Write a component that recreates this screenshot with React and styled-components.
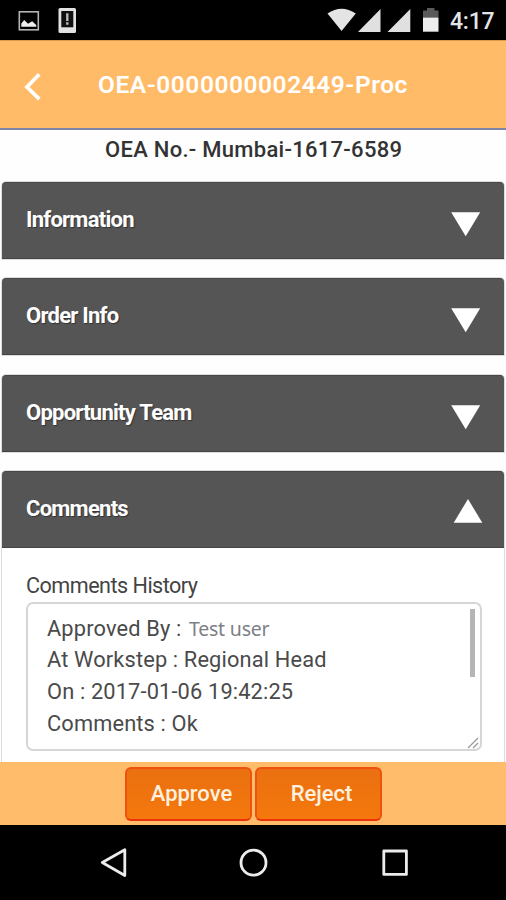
import React from 'react'
import styled, { createGlobalStyle } from 'styled-components'


const GlobalStyle = createGlobalStyle`
  * {
    box-sizing: border-box;
  }

  body {
    margin: 0;
    background: #fff;
    font-family: Roboto, "Liberation Sans", sans-serif;
  }
`

const Screen = styled.div`
  width: 506px;
  height: 900px;
  display: flex;
  flex-direction: column;
  overflow: hidden;
  background: #fefefe;
`

const StatusBar = styled.div`
  flex: none;
  height: 40px;
  display: flex;
  justify-content: space-between;
  background: #000;
`

const Clock = styled.span`
  width: 56px;
  padding-top: 2px;
  color: #e4e4e4;
  font-size: 23px;
  font-weight: 500;
  line-height: 40px;
  letter-spacing: -0.2px;
`

const StatusGroup = styled.div`
  display: flex;
`

const Header = styled.header`
  flex: none;
  height: 90px;
  display: flex;
  align-items: center;
  background: #ffbb67;
  border-top: 1px solid #d99a4e;
  border-bottom: 2px solid #8084a6;
`

const BackIcon = styled.svg`
  flex: none;
  width: 98px;
  height: 87px;
`

const Title = styled.h1`
  margin: 0;
  color: #fff;
  font-size: 24.5px;
  font-weight: 600;
  line-height: 28px;
  letter-spacing: 0.55px;
  white-space: nowrap;
`

const OrderNumber = styled.div`
  flex: none;
  height: 51px;
  padding-left: 105px;
  color: #333;
  font-size: 22px;
  font-weight: 500;
  line-height: 39px;
  letter-spacing: 0.28px;
  white-space: nowrap;
`

const Content = styled.main`
  flex: 1;
  min-height: 0;
  display: flex;
  flex-direction: column;
  gap: 17.3px;
  padding: 0 1px;
  overflow: hidden;
`

const Panel = styled.section`
  flex: none;
  border: 1px solid #ddd;
  border-radius: 5px 5px 0 0;
`

const PanelHeader = styled.div`
  height: 77px;
  display: flex;
  justify-content: space-between;
  background: #555;
  border-top: 1px solid #484848;
  border-bottom: 1px solid #444;
  border-radius: 4px 4px 0 0;
`

const PanelTitle = styled.h2`
  margin: 0;
  padding-left: 24px;
  color: #fff;
  font-size: 22px;
  font-weight: 700;
  line-height: 73px;
  letter-spacing: -0.75px;
  text-shadow: 1px 1px 1px #333;
`

const Arrow = styled.svg`
  width: 60px;
  height: 74px;
  fill: #fff;
`

const PanelBody = styled.div`
  height: 240px;
  padding: 23px 22px 0 24px;
  background: #fff;
`

const Label = styled.div`
  color: #444;
  font-size: 21.6px;
  line-height: 30px;
  letter-spacing: -0.52px;
`

const History = styled.div`
  position: relative;
  height: 149px;
  margin-top: 1px;
  padding: 9px 19px;
  border: 2px solid #d6d6d6;
  border-radius: 7px;
`

const HistoryLine = styled.div`
  color: #4a4a4a;
  font-size: 21.8px;
  line-height: 31.6px;
  letter-spacing: 0.15px;
  white-space: nowrap;
`

const UserName = styled.span`
  margin-left: 2px;
  color: #7d7f86;
  font-family: "Noto Sans", "Open Sans", sans-serif;
  font-size: 19.5px;
  line-height: 1;
  letter-spacing: -0.2px;
`

const ScrollThumb = styled.div`
  position: absolute;
  top: 5px;
  right: 5px;
  width: 5px;
  height: 68px;
  background: #b5b5b5;
`

const ResizeGrip = styled.svg`
  position: absolute;
  right: 0;
  bottom: 0;
  width: 13px;
  height: 12px;
`

const Footer = styled.footer`
  flex: none;
  height: 63px;
  display: flex;
  justify-content: center;
  gap: 3px;
  padding-top: 5px;
  background: #ffbd6b;
`

const ActionButton = styled.button`
  width: 127px;
  height: 54px;
  padding: 0 0 1px 7px;
  color: #fff0df;
  background: linear-gradient(#ea7011, #f4780c);
  border: 2px solid #ee520e;
  border-bottom-color: #ea3208;
  border-radius: 6px;
  font-family: inherit;
  font-size: 22px;
  font-weight: 500;
  letter-spacing: 0;
`

const NavBar = styled.nav`
  flex: none;
  height: 75px;
  background: #000;
`

const ARROWS = {
  down: 'M7.2 29.3H36.2L21.7 53.2Z',
  up: 'M24 27L38.3 50.8H9.7Z',
}

const LINES = [
  { text: 'Approved By : ', user: 'Test user' },
  { text: 'At Workstep : Regional Head' },
  { text: 'On : 2017-01-06 19:42:25' },
  { text: 'Comments : Ok' },
]

const Notifications = () =>
  <svg width="90" height="40" viewBox="0 0 90 40">
    <rect x="19.3" y="11.8" width="19" height="18" fill="none" stroke="#b4b4b4" strokeWidth="1.6"/>
    <path d="M21.3 26.8V23.5L24.2 20L28 23.8L32.2 21.2L36.2 25V26.8Z" fill="#eee"/>
    <rect x="58.5" y="8" width="17.5" height="25" rx="1.5" fill="#e2e2e2"/>
    <rect x="61.3" y="11" width="12" height="16.3" fill="#111"/>
    <path d="M67.3 13.3V21M67.3 22.3V24.8" stroke="#bbb" strokeWidth="2.4"/>
  </svg>

const Signals = () =>
  <svg width="126" height="40" viewBox="324 0 126 40">
    <path d="M327.5 13.5Q341.5 4 355.8 13.5L341.6 31Z" fill="#e4e4e4"/>
    <path d="M380.5 9V32H358ZM410.3 9V32H387.5Z" fill="#e0e0e0"/>
    <path d="M423 17.5V10.5H427V8H434.5V10.5H438.5V17.5Z" fill="#5a5a5a"/>
    <path d="M423 17.5H438.5V31.7H423Z" fill="#eee"/>
  </svg>

const NavIcons = () =>
  <svg width="506" height="75" viewBox="0 825 506 75" fill="none" stroke="#ececec" strokeWidth="2.8" strokeLinejoin="round">
    <path d="M102.3 862.5L124.8 849.8V875.5Z"/>
    <circle cx="253.5" cy="862.7" r="12.5"/>
    <rect x="383.8" y="851" width="22.6" height="23.4"/>
  </svg>

const Accordion = ({ title, open, children }) =>
  <Panel>
    <PanelHeader>
      <PanelTitle>{title}</PanelTitle>
      <Arrow viewBox="0 0 60 74">
        <path d={open ? ARROWS.up : ARROWS.down}/>
      </Arrow>
    </PanelHeader>
    {open ? <PanelBody>{children}</PanelBody> : null}
  </Panel>

const App = () =>
  <Screen>
    <GlobalStyle/>
    <StatusBar>
      <Notifications/>
      <StatusGroup>
        <Signals/>
        <Clock>4:17</Clock>
      </StatusGroup>
    </StatusBar>
    <Header>
      <BackIcon viewBox="0 0 98 87" fill="none" stroke="#fff" strokeWidth="3.8">
        <path d="M39.3 33.2L27 46L39.3 58.2"/>
      </BackIcon>
      <Title>OEA-0000000002449-Proc</Title>
    </Header>
    <OrderNumber>OEA No.- Mumbai-1617-6589</OrderNumber>
    <Content>
      <Accordion title="Information"/>
      <Accordion title="Order Info"/>
      <Accordion title="Opportunity Team"/>
      <Accordion title="Comments" open>
        <Label>Comments History</Label>
        <History>
          {LINES.map(line =>
            <HistoryLine key={line.text}>
              {line.text}
              {line.user ? <UserName>{line.user}</UserName> : null}
            </HistoryLine>
          )}
          <ScrollThumb/>
          <ResizeGrip viewBox="0 0 13 12" stroke="#999" strokeWidth="1.3">
            <path d="M1 11L11 1M6 11L11 6"/>
          </ResizeGrip>
        </History>
      </Accordion>
    </Content>
    <Footer>
      <ActionButton>Approve</ActionButton>
      <ActionButton>Reject</ActionButton>
    </Footer>
    <NavBar>
      <NavIcons/>
    </NavBar>
  </Screen>

export default App
